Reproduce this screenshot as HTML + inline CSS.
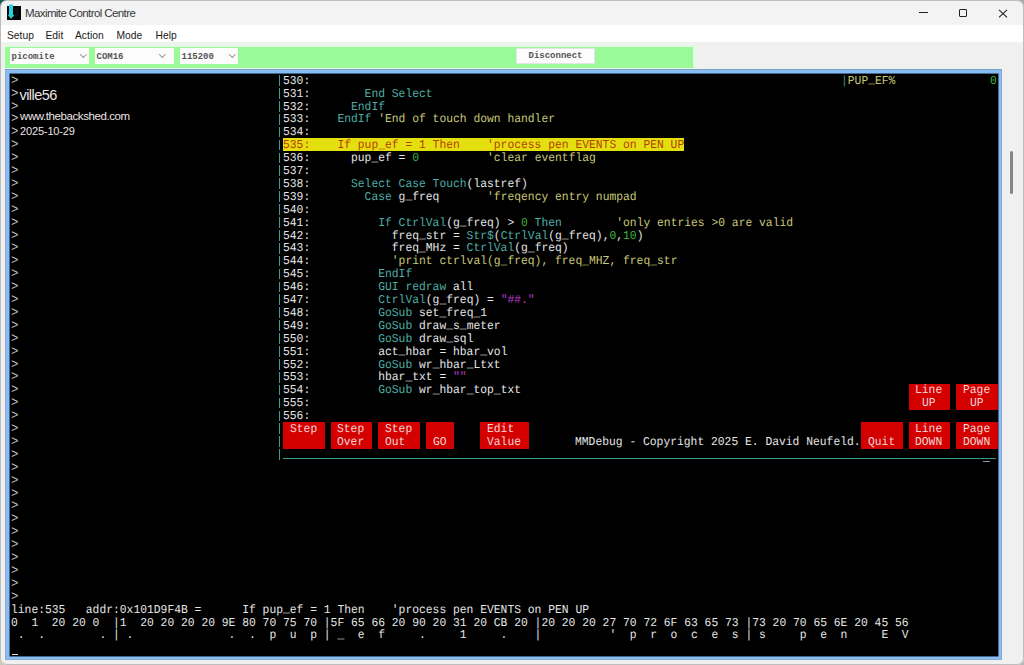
<!DOCTYPE html>
<html><head><meta charset="utf-8"><style>
html,body{margin:0;padding:0;}
body{width:1024px;height:665px;overflow:hidden;position:relative;background:#f0f0f0;font-family:"Liberation Sans",sans-serif;}
.abs{position:absolute;}
.t{position:absolute;white-space:pre;text-rendering:geometricPrecision;transform:scaleX(0.94429);transform-origin:0 0;font-family:"Liberation Mono",monospace;font-size:12.0px;line-height:12.9px;height:12.9px;color:#e6e6e6;}
.hl{position:absolute;background:#e4e010;}
.btn{position:absolute;background:#d40000;}
.bt{color:#f4e4e4;}
.menu span{position:absolute;top:29.5px;font-size:10.3px;color:#1a1a1a;}
.combo{position:absolute;top:48px;height:15.5px;background:#fcfcfc;}
.combo .v{position:absolute;left:2px;top:3.5px;font-family:"Liberation Mono",monospace;font-size:9px;font-weight:bold;color:#555;}
.chev{position:absolute;top:4.4px;width:3.6px;height:3.6px;border-right:1px solid #8a8a8a;border-bottom:1px solid #8a8a8a;transform:rotate(45deg);}
</style></head><body>
<!-- title bar -->
<div class="abs" style="left:0;top:0;width:1024px;height:25px;background:#f3f3f3"></div>
<div class="abs" style="left:7px;top:6px;width:13.5px;height:14px;background:#050505"></div>
<svg class="abs" style="left:0;top:0" width="24" height="24"><path d="M9 4.5 H13 V14.8 H14.6 L11 18.8 L7.6 14.8 H9 Z" fill="#22d4e6"/><path d="M8.6 15.2 H13.6 L11 18.4 Z" fill="#3cc8b0" opacity="0.8"/><path d="M15 9h3M15 12h3M15 15h3" stroke="#1c1c1c" stroke-width="1"/></svg>
<div class="abs" style="left:25px;top:7.3px;font-size:11.5px;letter-spacing:-0.6px;color:#383838">Maximite Control Centre</div>
<div class="abs" style="left:918.6px;top:12px;width:9.4px;height:1.1px;background:#222"></div>
<div class="abs" style="left:958.7px;top:9.1px;width:6.3px;height:5.7px;border:1.1px solid #222;border-radius:1px"></div>
<svg class="abs" style="left:998px;top:8.5px" width="10" height="10"><path d="M1 0.8 L9 8.4 M9 0.8 L1 8.4" stroke="#222" stroke-width="1.1"/></svg>
<!-- menu -->
<div class="abs" style="left:0;top:25px;width:1024px;height:16.5px;background:#ffffff"></div>
<div class="menu"><span style="left:7px">Setup</span><span style="left:45.5px">Edit</span><span style="left:75px">Action</span><span style="left:116.5px">Mode</span><span style="left:155.5px">Help</span></div>
<!-- toolbar -->
<div class="abs" style="left:3.5px;top:44px;width:693px;height:24.5px;background:#e6f8e6"></div><div class="abs" style="left:5px;top:47px;width:688px;height:21px;background:#98fb98"></div><div class="abs" style="left:5px;top:67px;width:688.5px;height:1px;background:#a6f4a6"></div>
<div class="combo" style="left:9.5px;width:79.5px"><span class="v">picomite</span><span class="chev" style="left:71px"></span></div>
<div class="combo" style="left:94.5px;width:79px"><span class="v">COM16</span><span class="chev" style="left:65px"></span></div>
<div class="combo" style="left:179.5px;width:58.5px"><span class="v">115200</span><span class="chev" style="left:50px"></span></div>
<div class="abs" style="left:516px;top:48px;width:78.5px;height:15.8px;box-sizing:border-box;background:#fcfcfc;border:1px solid #e4e4e4"></div>
<div class="abs" style="left:528.5px;top:50.5px;font-family:'Liberation Mono',monospace;font-size:9px;font-weight:bold;color:#555">Disconnect</div>
<!-- frame -->
<div class="abs" style="left:5.5px;top:68.5px;width:496.5px;"></div>
<div class="abs" style="left:5.1px;top:68.6px;width:996.9px;height:591.4px;background:#88bcf2;box-shadow:inset 0 1px 0 #7aa6c6,inset -1px 0 0 #8aaad0,inset 1px 0 0 #8aaad0,inset 0 -1px 0 #8aaad0"></div>
<div class="abs" style="left:9.8px;top:73.6px;width:988.2px;height:582.8px;background:#000;box-shadow:0 0 0 0.6px #1a3050"></div>
<!-- scrollbar -->
<div class="abs" style="left:1010px;top:151px;width:3px;height:43px;background:#858585;border-radius:1.5px"></div>
<div class="t " style="left:283.00px;top:74.70px"><span style="color:#e6e6e6">530:</span></div><div class="t " style="left:283.00px;top:87.60px"><span style="color:#e6e6e6">531:</span><span style="color:#e6e6e6">        </span><span style="color:#4eaea6">End Select</span></div><div class="t " style="left:283.00px;top:100.50px"><span style="color:#e6e6e6">532:</span><span style="color:#e6e6e6">      </span><span style="color:#4eaea6">EndIf</span></div><div class="t " style="left:283.00px;top:113.40px"><span style="color:#e6e6e6">533:</span><span style="color:#e6e6e6">    </span><span style="color:#4eaea6">EndIf</span><span style="color:#c8c87a"> &#x27;End of touch down handler</span></div><div class="t " style="left:283.00px;top:126.30px"><span style="color:#e6e6e6">534:</span></div><div class="t " style="left:283.00px;top:152.10px"><span style="color:#e6e6e6">536:</span><span style="color:#e6e6e6">      pup<span style="position:relative;top:-0.4px">_</span>ef = </span><span style="color:#3cb43c">0</span><span style="color:#e6e6e6">          </span><span style="color:#c8c87a">&#x27;clear eventflag</span></div><div class="t " style="left:283.00px;top:165.00px"><span style="color:#e6e6e6">537:</span></div><div class="t " style="left:283.00px;top:177.90px"><span style="color:#e6e6e6">538:</span><span style="color:#e6e6e6">      </span><span style="color:#4eaea6">Select Case Touch</span><span style="color:#e6e6e6">(lastref)</span></div><div class="t " style="left:283.00px;top:190.80px"><span style="color:#e6e6e6">539:</span><span style="color:#e6e6e6">        </span><span style="color:#4eaea6">Case</span><span style="color:#e6e6e6"> g<span style="position:relative;top:-0.4px">_</span>freq</span><span style="color:#e6e6e6">       </span><span style="color:#c8c87a">&#x27;freqency entry numpad</span></div><div class="t " style="left:283.00px;top:203.70px"><span style="color:#e6e6e6">540:</span></div><div class="t " style="left:283.00px;top:216.60px"><span style="color:#e6e6e6">541:</span><span style="color:#e6e6e6">          </span><span style="color:#4eaea6">If CtrlVal</span><span style="color:#e6e6e6">(g<span style="position:relative;top:-0.4px">_</span>freq) &gt; </span><span style="color:#3cb43c">0</span><span style="color:#4eaea6"> Then</span><span style="color:#e6e6e6">        </span><span style="color:#c8c87a">&#x27;only entries &gt;0 are valid</span></div><div class="t " style="left:283.00px;top:229.50px"><span style="color:#e6e6e6">542:</span><span style="color:#e6e6e6">            freq<span style="position:relative;top:-0.4px">_</span>str = </span><span style="color:#4eaea6">Str$</span><span style="color:#e6e6e6">(</span><span style="color:#4eaea6">CtrlVal</span><span style="color:#e6e6e6">(g<span style="position:relative;top:-0.4px">_</span>freq),</span><span style="color:#3cb43c">0</span><span style="color:#e6e6e6">,</span><span style="color:#3cb43c">10</span><span style="color:#e6e6e6">)</span></div><div class="t " style="left:283.00px;top:242.40px"><span style="color:#e6e6e6">543:</span><span style="color:#e6e6e6">            freq<span style="position:relative;top:-0.4px">_</span>MHz = </span><span style="color:#4eaea6">CtrlVal</span><span style="color:#e6e6e6">(g<span style="position:relative;top:-0.4px">_</span>freq)</span></div><div class="t " style="left:283.00px;top:255.30px"><span style="color:#e6e6e6">544:</span><span style="color:#e6e6e6">            </span><span style="color:#c8c87a">&#x27;print ctrlval(g<span style="position:relative;top:-0.4px">_</span>freq), freq<span style="position:relative;top:-0.4px">_</span>MHZ, freq<span style="position:relative;top:-0.4px">_</span>str</span></div><div class="t " style="left:283.00px;top:268.20px"><span style="color:#e6e6e6">545:</span><span style="color:#e6e6e6">          </span><span style="color:#4eaea6">EndIf</span></div><div class="t " style="left:283.00px;top:281.10px"><span style="color:#e6e6e6">546:</span><span style="color:#e6e6e6">          </span><span style="color:#4eaea6">GUI redraw</span><span style="color:#e6e6e6"> all</span></div><div class="t " style="left:283.00px;top:294.00px"><span style="color:#e6e6e6">547:</span><span style="color:#e6e6e6">          </span><span style="color:#4eaea6">CtrlVal</span><span style="color:#e6e6e6">(g<span style="position:relative;top:-0.4px">_</span>freq) = </span><span style="color:#b838c8">&quot;##.&quot;</span></div><div class="t " style="left:283.00px;top:306.90px"><span style="color:#e6e6e6">548:</span><span style="color:#e6e6e6">          </span><span style="color:#4eaea6">GoSub</span><span style="color:#e6e6e6"> set<span style="position:relative;top:-0.4px">_</span>freq<span style="position:relative;top:-0.4px">_</span>1</span></div><div class="t " style="left:283.00px;top:319.80px"><span style="color:#e6e6e6">549:</span><span style="color:#e6e6e6">          </span><span style="color:#4eaea6">GoSub</span><span style="color:#e6e6e6"> draw<span style="position:relative;top:-0.4px">_</span>s<span style="position:relative;top:-0.4px">_</span>meter</span></div><div class="t " style="left:283.00px;top:332.70px"><span style="color:#e6e6e6">550:</span><span style="color:#e6e6e6">          </span><span style="color:#4eaea6">GoSub</span><span style="color:#e6e6e6"> draw<span style="position:relative;top:-0.4px">_</span>sql</span></div><div class="t " style="left:283.00px;top:345.60px"><span style="color:#e6e6e6">551:</span><span style="color:#e6e6e6">          act<span style="position:relative;top:-0.4px">_</span>hbar = hbar<span style="position:relative;top:-0.4px">_</span>vol</span></div><div class="t " style="left:283.00px;top:358.50px"><span style="color:#e6e6e6">552:</span><span style="color:#e6e6e6">          </span><span style="color:#4eaea6">GoSub</span><span style="color:#e6e6e6"> wr<span style="position:relative;top:-0.4px">_</span>hbar<span style="position:relative;top:-0.4px">_</span>Ltxt</span></div><div class="t " style="left:283.00px;top:371.40px"><span style="color:#e6e6e6">553:</span><span style="color:#e6e6e6">          hbar<span style="position:relative;top:-0.4px">_</span>txt = </span><span style="color:#b838c8">&quot;&quot;</span></div><div class="t " style="left:283.00px;top:384.30px"><span style="color:#e6e6e6">554:</span><span style="color:#e6e6e6">          </span><span style="color:#4eaea6">GoSub</span><span style="color:#e6e6e6"> wr<span style="position:relative;top:-0.4px">_</span>hbar<span style="position:relative;top:-0.4px">_</span>top<span style="position:relative;top:-0.4px">_</span>txt</span></div><div class="t " style="left:283.00px;top:397.20px"><span style="color:#e6e6e6">555:</span></div><div class="t " style="left:283.00px;top:410.10px"><span style="color:#e6e6e6">556:</span></div><div class="hl" style="left:282.80px;top:137.80px;width:401.40px;height:12.90px"></div><div class="t " style="left:283.00px;top:139.20px"><span style="color:#b44000">535:    If pup<span style="position:relative;top:-0.4px">_</span>ef = 1 Then    &#x27;process pen EVENTS on PEN UP</span></div><div style="position:absolute;left:278.6px;top:75.10px;width:1.4px;height:10.8px;background:#36a090"></div><div style="position:absolute;left:278.6px;top:88.00px;width:1.4px;height:10.8px;background:#36a090"></div><div style="position:absolute;left:278.6px;top:100.90px;width:1.4px;height:10.8px;background:#36a090"></div><div style="position:absolute;left:278.6px;top:113.80px;width:1.4px;height:10.8px;background:#36a090"></div><div style="position:absolute;left:278.6px;top:126.70px;width:1.4px;height:10.8px;background:#36a090"></div><div style="position:absolute;left:278.6px;top:139.60px;width:1.4px;height:10.8px;background:#36a090"></div><div style="position:absolute;left:278.6px;top:152.50px;width:1.4px;height:10.8px;background:#36a090"></div><div style="position:absolute;left:278.6px;top:165.40px;width:1.4px;height:10.8px;background:#36a090"></div><div style="position:absolute;left:278.6px;top:178.30px;width:1.4px;height:10.8px;background:#36a090"></div><div style="position:absolute;left:278.6px;top:191.20px;width:1.4px;height:10.8px;background:#36a090"></div><div style="position:absolute;left:278.6px;top:204.10px;width:1.4px;height:10.8px;background:#36a090"></div><div style="position:absolute;left:278.6px;top:217.00px;width:1.4px;height:10.8px;background:#36a090"></div><div style="position:absolute;left:278.6px;top:229.90px;width:1.4px;height:10.8px;background:#36a090"></div><div style="position:absolute;left:278.6px;top:242.80px;width:1.4px;height:10.8px;background:#36a090"></div><div style="position:absolute;left:278.6px;top:255.70px;width:1.4px;height:10.8px;background:#36a090"></div><div style="position:absolute;left:278.6px;top:268.60px;width:1.4px;height:10.8px;background:#36a090"></div><div style="position:absolute;left:278.6px;top:281.50px;width:1.4px;height:10.8px;background:#36a090"></div><div style="position:absolute;left:278.6px;top:294.40px;width:1.4px;height:10.8px;background:#36a090"></div><div style="position:absolute;left:278.6px;top:307.30px;width:1.4px;height:10.8px;background:#36a090"></div><div style="position:absolute;left:278.6px;top:320.20px;width:1.4px;height:10.8px;background:#36a090"></div><div style="position:absolute;left:278.6px;top:333.10px;width:1.4px;height:10.8px;background:#36a090"></div><div style="position:absolute;left:278.6px;top:346.00px;width:1.4px;height:10.8px;background:#36a090"></div><div style="position:absolute;left:278.6px;top:358.90px;width:1.4px;height:10.8px;background:#36a090"></div><div style="position:absolute;left:278.6px;top:371.80px;width:1.4px;height:10.8px;background:#36a090"></div><div style="position:absolute;left:278.6px;top:384.70px;width:1.4px;height:10.8px;background:#36a090"></div><div style="position:absolute;left:278.6px;top:397.60px;width:1.4px;height:10.8px;background:#36a090"></div><div style="position:absolute;left:278.6px;top:410.50px;width:1.4px;height:10.8px;background:#36a090"></div><div style="position:absolute;left:278.6px;top:423.40px;width:1.4px;height:10.8px;background:#36a090"></div><div style="position:absolute;left:278.6px;top:436.30px;width:1.4px;height:10.8px;background:#36a090"></div><div style="position:absolute;left:278.6px;top:449.20px;width:1.4px;height:10.8px;background:#36a090"></div><div class="t " style="left:840.60px;top:74.70px"><span style="color:#3a9a88">|</span><span style="color:#c8c870">PUP<span style="position:relative;top:-0.4px">_</span>EF%</span></div><div class="t " style="left:990.20px;top:74.70px"><span style="color:#3cb43c">0</span></div><div style="position:absolute;left:283.00px;top:458px;width:713.00px;height:1.3px;background:#3a9a88"></div><div style="position:absolute;left:983px;top:460.5px;width:7px;height:1.2px;background:#909090"></div><div class="btn" style="left:283.00px;top:422.40px;width:41.60px;height:26.60px"></div><div class="t " style="left:289.80px;top:423.00px"><span style="color:#f2d6d6">Step</span></div><div class="btn" style="left:330.60px;top:422.40px;width:41.60px;height:26.60px"></div><div class="t " style="left:337.40px;top:423.00px"><span style="color:#f2d6d6">Step</span></div><div class="t " style="left:337.40px;top:435.90px"><span style="color:#f2d6d6">Over</span></div><div class="btn" style="left:378.20px;top:422.40px;width:41.60px;height:26.60px"></div><div class="t " style="left:385.00px;top:423.00px"><span style="color:#f2d6d6">Step</span></div><div class="t " style="left:385.00px;top:435.90px"><span style="color:#f2d6d6">Out</span></div><div class="btn" style="left:425.80px;top:422.40px;width:28.00px;height:26.60px"></div><div class="t " style="left:432.60px;top:435.90px"><span style="color:#f2d6d6">GO</span></div><div class="btn" style="left:480.20px;top:422.40px;width:48.40px;height:26.60px"></div><div class="t " style="left:487.00px;top:423.00px"><span style="color:#f2d6d6">Edit</span></div><div class="t " style="left:487.00px;top:435.90px"><span style="color:#f2d6d6">Value</span></div><div class="btn" style="left:861.00px;top:422.40px;width:41.60px;height:26.60px"></div><div class="t " style="left:867.80px;top:435.90px"><span style="color:#f2d6d6">Quit</span></div><div class="btn" style="left:908.60px;top:422.40px;width:41.60px;height:26.60px"></div><div class="t " style="left:915.40px;top:423.00px"><span style="color:#f2d6d6">Line</span></div><div class="t " style="left:915.40px;top:435.90px"><span style="color:#f2d6d6">DOWN</span></div><div class="btn" style="left:956.20px;top:422.40px;width:41.60px;height:26.60px"></div><div class="t " style="left:963.00px;top:423.00px"><span style="color:#f2d6d6">Page</span></div><div class="t " style="left:963.00px;top:435.90px"><span style="color:#f2d6d6">DOWN</span></div><div class="btn" style="left:908.60px;top:383.70px;width:41.60px;height:26.60px"></div><div class="t " style="left:915.40px;top:384.30px"><span style="color:#f2d6d6">Line</span></div><div class="t " style="left:922.20px;top:397.20px"><span style="color:#f2d6d6">UP</span></div><div class="btn" style="left:956.20px;top:383.70px;width:41.60px;height:26.60px"></div><div class="t " style="left:963.00px;top:384.30px"><span style="color:#f2d6d6">Page</span></div><div class="t " style="left:969.80px;top:397.20px"><span style="color:#f2d6d6">UP</span></div><div class="t " style="left:575.40px;top:435.90px"><span style="color:#e6e6e6">MMDebug - Copyright 2025 E. David Neufeld.</span></div><div class="t" style="left:10.6px;top:74.70px;font-size:13.2px;color:#c8c8c8">&gt;</div><div class="t" style="left:10.6px;top:87.60px;font-size:13.2px;color:#c8c8c8">&gt;</div><div class="t" style="left:10.6px;top:100.50px;font-size:13.2px;color:#c8c8c8">&gt;</div><div class="t" style="left:10.6px;top:113.40px;font-size:13.2px;color:#c8c8c8">&gt;</div><div class="t" style="left:10.6px;top:126.30px;font-size:13.2px;color:#c8c8c8">&gt;</div><div class="t" style="left:10.6px;top:139.20px;font-size:13.2px;color:#c8c8c8">&gt;</div><div class="t" style="left:10.6px;top:152.10px;font-size:13.2px;color:#c8c8c8">&gt;</div><div class="t" style="left:10.6px;top:165.00px;font-size:13.2px;color:#c8c8c8">&gt;</div><div class="t" style="left:10.6px;top:177.90px;font-size:13.2px;color:#c8c8c8">&gt;</div><div class="t" style="left:10.6px;top:190.80px;font-size:13.2px;color:#c8c8c8">&gt;</div><div class="t" style="left:10.6px;top:203.70px;font-size:13.2px;color:#c8c8c8">&gt;</div><div class="t" style="left:10.6px;top:216.60px;font-size:13.2px;color:#c8c8c8">&gt;</div><div class="t" style="left:10.6px;top:229.50px;font-size:13.2px;color:#c8c8c8">&gt;</div><div class="t" style="left:10.6px;top:242.40px;font-size:13.2px;color:#c8c8c8">&gt;</div><div class="t" style="left:10.6px;top:255.30px;font-size:13.2px;color:#c8c8c8">&gt;</div><div class="t" style="left:10.6px;top:268.20px;font-size:13.2px;color:#c8c8c8">&gt;</div><div class="t" style="left:10.6px;top:281.10px;font-size:13.2px;color:#c8c8c8">&gt;</div><div class="t" style="left:10.6px;top:294.00px;font-size:13.2px;color:#c8c8c8">&gt;</div><div class="t" style="left:10.6px;top:306.90px;font-size:13.2px;color:#c8c8c8">&gt;</div><div class="t" style="left:10.6px;top:319.80px;font-size:13.2px;color:#c8c8c8">&gt;</div><div class="t" style="left:10.6px;top:332.70px;font-size:13.2px;color:#c8c8c8">&gt;</div><div class="t" style="left:10.6px;top:345.60px;font-size:13.2px;color:#c8c8c8">&gt;</div><div class="t" style="left:10.6px;top:358.50px;font-size:13.2px;color:#c8c8c8">&gt;</div><div class="t" style="left:10.6px;top:371.40px;font-size:13.2px;color:#c8c8c8">&gt;</div><div class="t" style="left:10.6px;top:384.30px;font-size:13.2px;color:#c8c8c8">&gt;</div><div class="t" style="left:10.6px;top:397.20px;font-size:13.2px;color:#c8c8c8">&gt;</div><div class="t" style="left:10.6px;top:410.10px;font-size:13.2px;color:#c8c8c8">&gt;</div><div class="t" style="left:10.6px;top:423.00px;font-size:13.2px;color:#c8c8c8">&gt;</div><div class="t" style="left:10.6px;top:435.90px;font-size:13.2px;color:#c8c8c8">&gt;</div><div class="t" style="left:10.6px;top:448.80px;font-size:13.2px;color:#c8c8c8">&gt;</div><div class="t" style="left:10.6px;top:461.70px;font-size:13.2px;color:#c8c8c8">&gt;</div><div class="t" style="left:10.6px;top:474.60px;font-size:13.2px;color:#c8c8c8">&gt;</div><div class="t" style="left:10.6px;top:487.50px;font-size:13.2px;color:#c8c8c8">&gt;</div><div class="t" style="left:10.6px;top:500.40px;font-size:13.2px;color:#c8c8c8">&gt;</div><div class="t" style="left:10.6px;top:513.30px;font-size:13.2px;color:#c8c8c8">&gt;</div><div class="t" style="left:10.6px;top:526.20px;font-size:13.2px;color:#c8c8c8">&gt;</div><div class="t" style="left:10.6px;top:539.10px;font-size:13.2px;color:#c8c8c8">&gt;</div><div class="t" style="left:10.6px;top:552.00px;font-size:13.2px;color:#c8c8c8">&gt;</div><div class="t" style="left:10.6px;top:564.90px;font-size:13.2px;color:#c8c8c8">&gt;</div><div class="t" style="left:10.6px;top:577.80px;font-size:13.2px;color:#c8c8c8">&gt;</div><div class="t" style="left:10.6px;top:590.70px;font-size:13.2px;color:#c8c8c8">&gt;</div><div class="t " style="left:11.00px;top:603.60px"><span style="color:#e6e6e6">line:535   addr:0x101D9F4B =      If pup<span style="position:relative;top:-0.4px">_</span>ef = 1 Then    &#x27;process pen EVENTS on PEN UP</span></div><div class="t " style="left:11.00px;top:616.50px"><span style="color:#e6e6e6">0  1  20 20 0  |1  20 20 20 20 9E 80 70 75 70 |5F 65 66 20 90 20 31 20 CB 20 |20 20 20 27 70 72 6F 63 65 73 |73 20 70 65 6E 20 45 56</span></div><div class="t " style="left:11.00px;top:629.40px"><span style="color:#e6e6e6"> .  .        . | .              .  .  p  u  p | <span style="position:relative;top:-0.4px">_</span>  e  f     .     1     .    |          &#x27;  p  r  o  c  e  s | s     p  e  n     E  V</span></div><div style="position:absolute;left:11.5px;top:653.5px;width:6.5px;height:1.2px;background:#d8d8d8"></div>
<div class="abs" style="left:19.5px;top:87px;font-size:14.5px;letter-spacing:-0.55px;color:#ece4e4">ville56</div>
<div class="abs" style="left:20px;top:110px;font-size:11.5px;letter-spacing:-0.42px;color:#ece4e4">www.thebackshed.com</div>
<div class="abs" style="left:20px;top:124.5px;font-size:11px;letter-spacing:-0.15px;color:#ece4e4">2025-10-29</div>
<div class="abs" style="left:0;top:0;width:1024px;height:665px;box-sizing:border-box;border:1px solid #bdbdbd;border-radius:7px;pointer-events:none"></div>
<svg class="abs" style="left:0;top:0" width="8" height="8"><path d="M0 0 H7 A7 7 0 0 0 0 7 Z" fill="#155e52"/></svg>
<svg class="abs" style="left:1016px;top:0" width="8" height="8"><path d="M8 0 H1 A7 7 0 0 1 8 7 Z" fill="#a8a8a8"/></svg>
<svg class="abs" style="left:0;top:657px" width="8" height="8"><path d="M0 8 H7 A7 7 0 0 1 0 1 Z" fill="#c4cabc"/></svg>
<svg class="abs" style="left:1016px;top:657px" width="8" height="8"><path d="M8 8 H1 A7 7 0 0 0 8 1 Z" fill="#b8b8b8"/></svg>
</body></html>
